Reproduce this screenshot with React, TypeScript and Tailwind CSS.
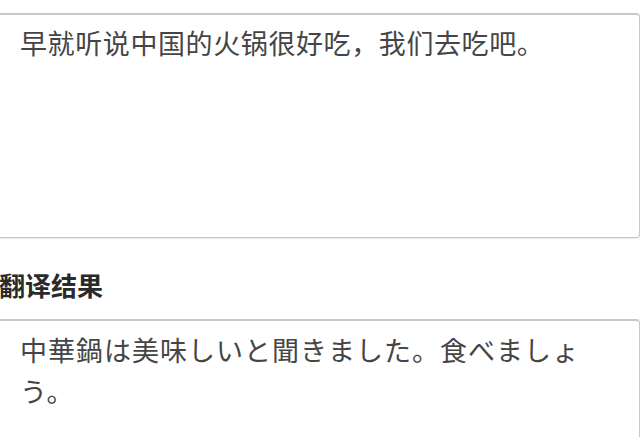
import React from 'react';

const SOURCE_TEXT = '早就听说中国的火锅很好吃，我们去吃吧。';
const RESULT_TEXT = '中華鍋は美味しいと聞きました。食べましょう。';

const App: React.FC = () => {
  return (
    <div className="w-[640px] h-[437px] overflow-hidden bg-white">
      <div className="-ml-[12px] w-[652px] pt-[13px]">
        {/* input box */}
        <div className="h-[225px] border border-[#c8c8c8] border-t-2 rounded-[4px] bg-white pl-[31px] pr-[20px] pt-[10px] shadow-[0_1px_1px_rgba(0,0,0,0.08)]">
          <p
            className="text-[27px] leading-[36px] tracking-[0.6px] text-[#454545]"
            style={{ fontFamily: '"Noto Sans CJK SC", "Noto Sans", sans-serif' }}
          >
            {SOURCE_TEXT}
          </p>
        </div>

        <div className="h-[81px] pl-[11px] pt-[34px]">
          <h3
            className="text-[26px] leading-[26px] font-bold text-[#2a2a2a]"
            style={{ fontFamily: '"Noto Sans CJK SC", "Noto Sans", sans-serif' }}
          >
            翻译结果
          </h3>
        </div>

        {/* result box */}
        <div className="h-[200px] border border-[#c8c8c8] border-t-2 rounded-[4px] bg-white pl-[31px] pr-[50px] pt-[8px]">
          <p
            className="text-[27px] leading-[41px] tracking-[1px] text-[#454545]"
            style={{ fontFamily: '"Noto Sans CJK JP", "Noto Sans", sans-serif' }}
          >
            {RESULT_TEXT}
          </p>
        </div>
      </div>
    </div>
  );
};

export default App;
